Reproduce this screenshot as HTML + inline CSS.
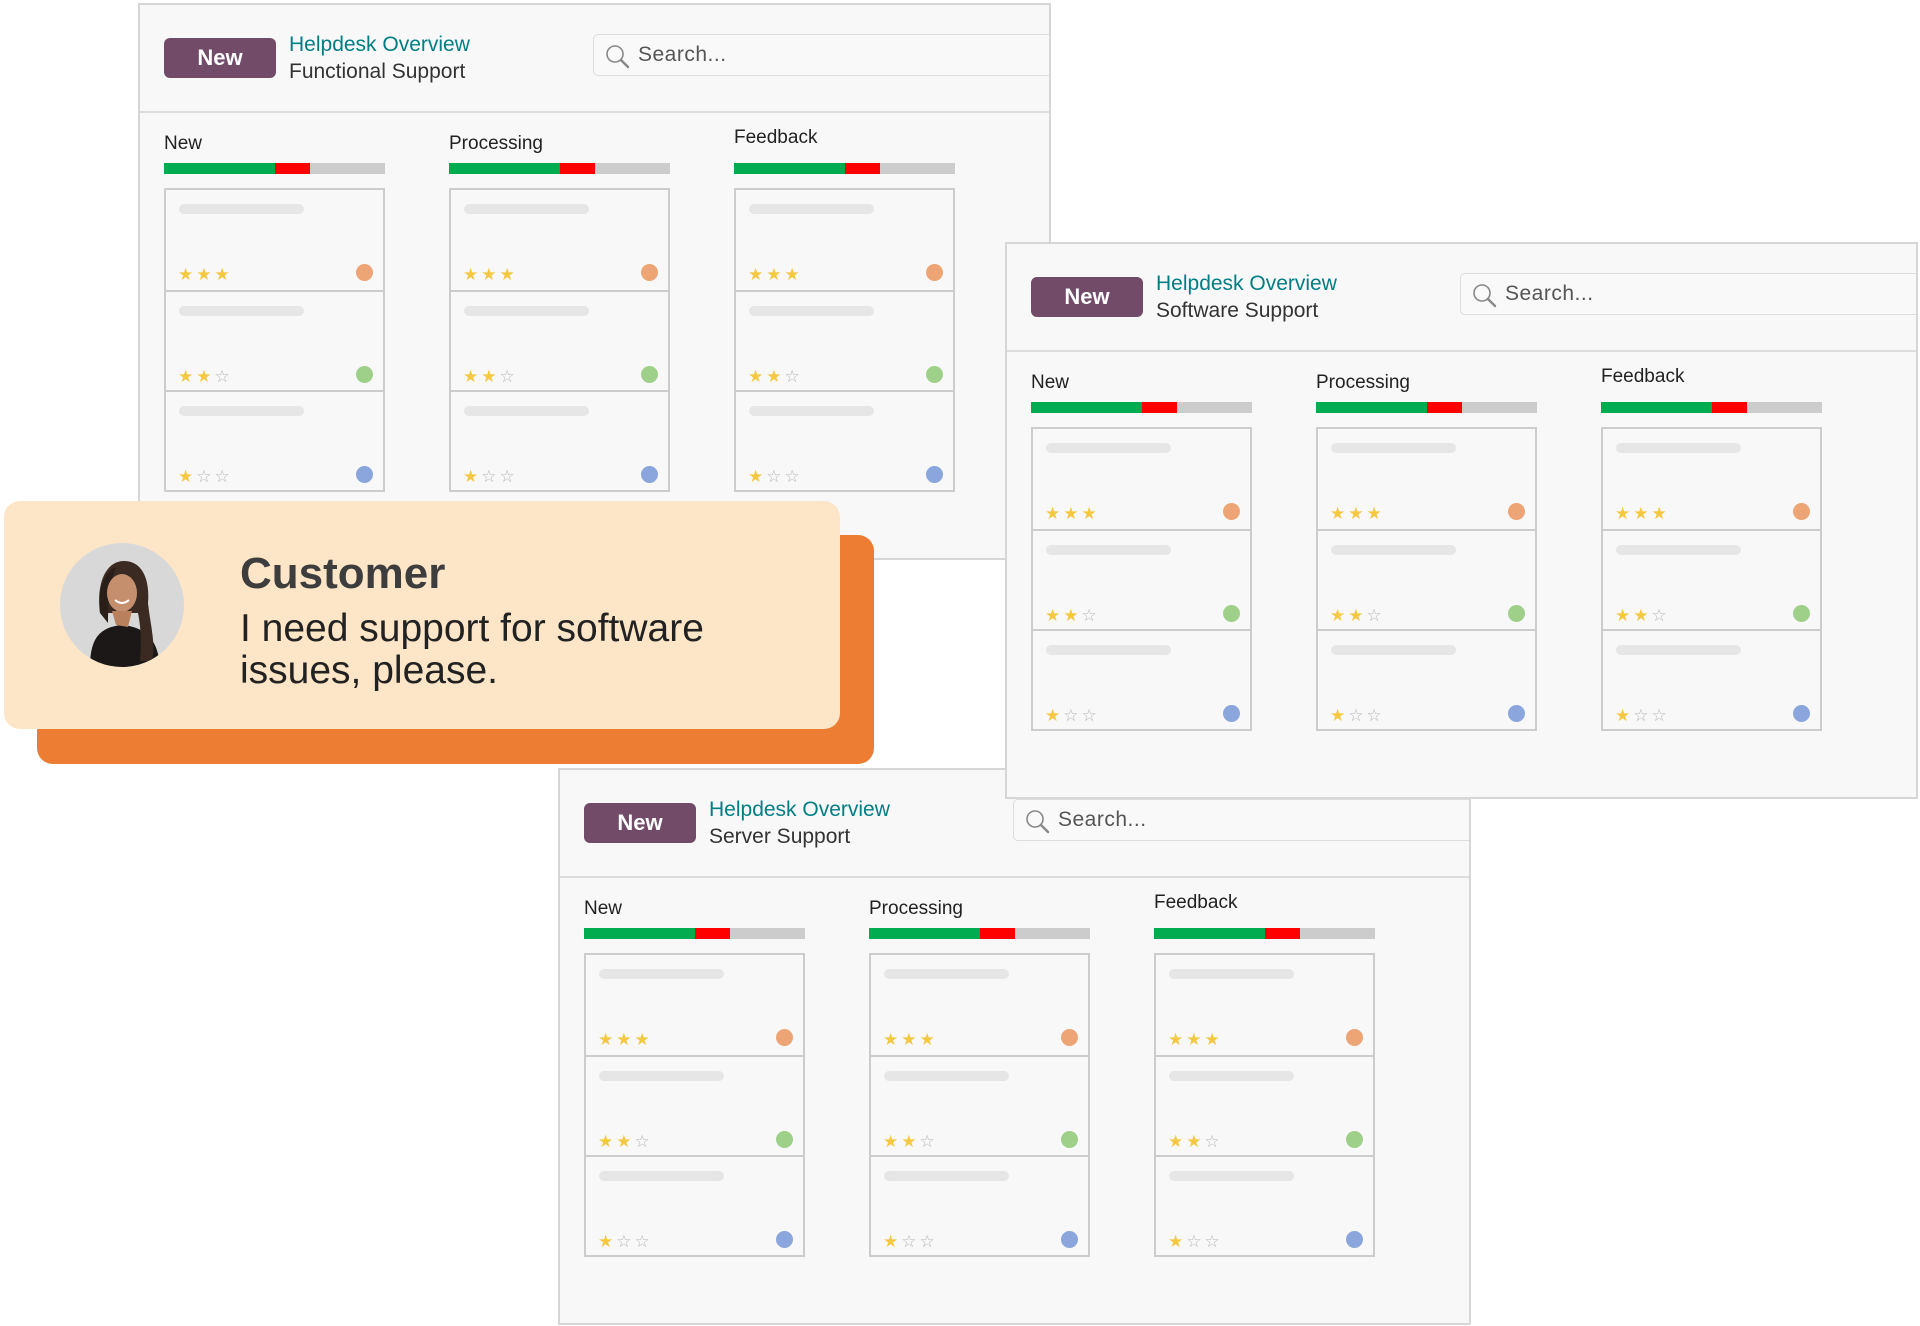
<!DOCTYPE html>
<html><head><meta charset="utf-8"><style>
body{margin:0;width:1920px;height:1326px;background:#fff;position:relative;overflow:hidden;font-family:"Liberation Sans",sans-serif}
.p{position:absolute;width:909px;height:553px;background:#f8f8f8;border:2px solid #d6d6d6;overflow:hidden}
.hd{position:absolute;left:0;top:0;width:909px;height:106px;border-bottom:2px solid #ddd}
.btn{position:absolute;left:24px;top:33px;width:112px;height:40px;background:#714b67;border-radius:6px;color:#fff;font-weight:bold;font-size:22px;line-height:40px;text-align:center}
.t1{position:absolute;left:149px;top:28px;font-size:21px;color:#017e84}
.t2{position:absolute;left:149px;top:55px;font-size:21px;color:#333}
.sr{position:absolute;left:453px;top:29px;width:470px;height:40px;border:1px solid #ddd;border-radius:5px;background:#f9f9f9}
.sr svg{position:absolute;left:10px;top:8px}
.sr span{position:absolute;left:44px;top:8px;font-size:21px;color:#555;letter-spacing:.5px}
.col{position:absolute;top:0;width:221px;height:553px}
.h{position:absolute;left:0;top:128px;font-size:19px;color:#222}
.bar{position:absolute;left:0;top:158px;width:221px;height:11px;background:#ccc}
.bar i{position:absolute;top:0;height:11px}
.cards{position:absolute;left:0;top:183px;width:217px;height:300px;border:2px solid #ccc;background:#f8f8f8}
.c{position:absolute;left:0;width:217px;height:100px}
.c+.c{border-top:2px solid #ccc}
.ph{position:absolute;left:13px;top:14px;width:125px;height:10px;border-radius:5px;background:#e6e6e6}
.st{position:absolute;left:12px;top:75px;font-size:17px;letter-spacing:3px;color:#f5c842}
.st b{color:#b8b8b8;font-weight:normal}
.d{position:absolute;right:10px;top:74px;width:17px;height:17px;border-radius:50%}
</style></head><body>

<!-- Panel 1 -->
<div class="p" style="left:138px;top:3px">
<div class="hd"></div><div class="btn">New</div><div class="t1">Helpdesk Overview</div><div class="t2">Functional Support</div>
<div class="sr"><svg width="28" height="28" viewBox="0 0 28 28"><circle cx="11" cy="11" r="8" fill="none" stroke="#888" stroke-width="1.6"/><path d="M17 17l7 7" stroke="#888" stroke-width="2.4" stroke-linecap="round"/></svg><span>Search...</span></div>
<div class="col" style="left:24px"><div class="h">New</div><div class="bar"><i style="left:0;width:111px;background:#00ac4f"></i><i style="left:111px;width:35px;background:#f00"></i></div>
<div class="cards"><div class="c" style="top:0"><div class="ph"></div><div class="st">★★★</div><div class="d" style="background:#eda575"></div></div><div class="c" style="top:100px"><div class="ph"></div><div class="st">★★<b>☆</b></div><div class="d" style="background:#9fd08a"></div></div><div class="c" style="top:200px"><div class="ph"></div><div class="st">★<b>☆☆</b></div><div class="d" style="background:#8aa6dc"></div></div></div></div>
<div class="col" style="left:309px"><div class="h">Processing</div><div class="bar"><i style="left:0;width:111px;background:#00ac4f"></i><i style="left:111px;width:35px;background:#f00"></i></div>
<div class="cards"><div class="c" style="top:0"><div class="ph"></div><div class="st">★★★</div><div class="d" style="background:#eda575"></div></div><div class="c" style="top:100px"><div class="ph"></div><div class="st">★★<b>☆</b></div><div class="d" style="background:#9fd08a"></div></div><div class="c" style="top:200px"><div class="ph"></div><div class="st">★<b>☆☆</b></div><div class="d" style="background:#8aa6dc"></div></div></div></div>
<div class="col" style="left:594px"><div class="h" style="top:122px">Feedback</div><div class="bar"><i style="left:0;width:111px;background:#00ac4f"></i><i style="left:111px;width:35px;background:#f00"></i></div>
<div class="cards"><div class="c" style="top:0"><div class="ph"></div><div class="st">★★★</div><div class="d" style="background:#eda575"></div></div><div class="c" style="top:100px"><div class="ph"></div><div class="st">★★<b>☆</b></div><div class="d" style="background:#9fd08a"></div></div><div class="c" style="top:200px"><div class="ph"></div><div class="st">★<b>☆☆</b></div><div class="d" style="background:#8aa6dc"></div></div></div></div>
</div>

<!-- Panel 3 -->
<div class="p" style="left:558px;top:768px">
<div class="hd"></div><div class="btn">New</div><div class="t1">Helpdesk Overview</div><div class="t2">Server Support</div>
<div class="sr"><svg width="28" height="28" viewBox="0 0 28 28"><circle cx="11" cy="11" r="8" fill="none" stroke="#888" stroke-width="1.6"/><path d="M17 17l7 7" stroke="#888" stroke-width="2.4" stroke-linecap="round"/></svg><span>Search...</span></div>
<div class="col" style="left:24px"><div class="h">New</div><div class="bar"><i style="left:0;width:111px;background:#00ac4f"></i><i style="left:111px;width:35px;background:#f00"></i></div>
<div class="cards"><div class="c" style="top:0"><div class="ph"></div><div class="st">★★★</div><div class="d" style="background:#eda575"></div></div><div class="c" style="top:100px"><div class="ph"></div><div class="st">★★<b>☆</b></div><div class="d" style="background:#9fd08a"></div></div><div class="c" style="top:200px"><div class="ph"></div><div class="st">★<b>☆☆</b></div><div class="d" style="background:#8aa6dc"></div></div></div></div>
<div class="col" style="left:309px"><div class="h">Processing</div><div class="bar"><i style="left:0;width:111px;background:#00ac4f"></i><i style="left:111px;width:35px;background:#f00"></i></div>
<div class="cards"><div class="c" style="top:0"><div class="ph"></div><div class="st">★★★</div><div class="d" style="background:#eda575"></div></div><div class="c" style="top:100px"><div class="ph"></div><div class="st">★★<b>☆</b></div><div class="d" style="background:#9fd08a"></div></div><div class="c" style="top:200px"><div class="ph"></div><div class="st">★<b>☆☆</b></div><div class="d" style="background:#8aa6dc"></div></div></div></div>
<div class="col" style="left:594px"><div class="h" style="top:122px">Feedback</div><div class="bar"><i style="left:0;width:111px;background:#00ac4f"></i><i style="left:111px;width:35px;background:#f00"></i></div>
<div class="cards"><div class="c" style="top:0"><div class="ph"></div><div class="st">★★★</div><div class="d" style="background:#eda575"></div></div><div class="c" style="top:100px"><div class="ph"></div><div class="st">★★<b>☆</b></div><div class="d" style="background:#9fd08a"></div></div><div class="c" style="top:200px"><div class="ph"></div><div class="st">★<b>☆☆</b></div><div class="d" style="background:#8aa6dc"></div></div></div></div>
</div>

<!-- Panel 2 -->
<div class="p" style="left:1005px;top:242px">
<div class="hd"></div><div class="btn">New</div><div class="t1">Helpdesk Overview</div><div class="t2">Software Support</div>
<div class="sr"><svg width="28" height="28" viewBox="0 0 28 28"><circle cx="11" cy="11" r="8" fill="none" stroke="#888" stroke-width="1.6"/><path d="M17 17l7 7" stroke="#888" stroke-width="2.4" stroke-linecap="round"/></svg><span>Search...</span></div>
<div class="col" style="left:24px"><div class="h">New</div><div class="bar"><i style="left:0;width:111px;background:#00ac4f"></i><i style="left:111px;width:35px;background:#f00"></i></div>
<div class="cards"><div class="c" style="top:0"><div class="ph"></div><div class="st">★★★</div><div class="d" style="background:#eda575"></div></div><div class="c" style="top:100px"><div class="ph"></div><div class="st">★★<b>☆</b></div><div class="d" style="background:#9fd08a"></div></div><div class="c" style="top:200px"><div class="ph"></div><div class="st">★<b>☆☆</b></div><div class="d" style="background:#8aa6dc"></div></div></div></div>
<div class="col" style="left:309px"><div class="h">Processing</div><div class="bar"><i style="left:0;width:111px;background:#00ac4f"></i><i style="left:111px;width:35px;background:#f00"></i></div>
<div class="cards"><div class="c" style="top:0"><div class="ph"></div><div class="st">★★★</div><div class="d" style="background:#eda575"></div></div><div class="c" style="top:100px"><div class="ph"></div><div class="st">★★<b>☆</b></div><div class="d" style="background:#9fd08a"></div></div><div class="c" style="top:200px"><div class="ph"></div><div class="st">★<b>☆☆</b></div><div class="d" style="background:#8aa6dc"></div></div></div></div>
<div class="col" style="left:594px"><div class="h" style="top:122px">Feedback</div><div class="bar"><i style="left:0;width:111px;background:#00ac4f"></i><i style="left:111px;width:35px;background:#f00"></i></div>
<div class="cards"><div class="c" style="top:0"><div class="ph"></div><div class="st">★★★</div><div class="d" style="background:#eda575"></div></div><div class="c" style="top:100px"><div class="ph"></div><div class="st">★★<b>☆</b></div><div class="d" style="background:#9fd08a"></div></div><div class="c" style="top:200px"><div class="ph"></div><div class="st">★<b>☆☆</b></div><div class="d" style="background:#8aa6dc"></div></div></div></div>
</div>

<!-- Customer card -->
<div style="position:absolute;left:37px;top:535px;width:837px;height:229px;background:#ec7d32;border-radius:16px"></div>
<div style="position:absolute;left:4px;top:501px;width:836px;height:228px;background:#fde6c8;border-radius:16px">
<svg style="position:absolute;left:56px;top:42px" width="124" height="124" viewBox="0 0 124 124">
<defs><clipPath id="cc"><circle cx="62" cy="62" r="62"/></clipPath></defs>
<g clip-path="url(#cc)">
<rect width="124" height="124" fill="#d8d8d8"/>
<path d="M30 124 C30 95 40 84 62 82 C84 84 98 95 100 124Z" fill="#1c1818"/>
<path d="M40 70 C36 40 46 18 64 18 C82 18 90 36 88 60 C90 80 96 100 92 118 L80 118 C82 95 80 80 78 70Z" fill="#3a2a22"/>
<path d="M40 70 C38 50 42 30 56 24 C50 40 48 60 48 80Z" fill="#2a1e18"/>
<ellipse cx="62" cy="50" rx="15" ry="19" fill="#c58f6e"/>
<path d="M52 68 L56 82 L68 84 L72 68Z" fill="#b9805e"/>
<path d="M55 57 Q62 63 69 57" stroke="#fff" stroke-width="2" fill="none"/>
</g></svg>
<div style="position:absolute;left:236px;top:48px;font-size:44px;font-weight:bold;color:#3d3d3d">Customer</div>
<div style="position:absolute;left:236px;top:107px;font-size:39px;line-height:42px;color:#222">I need support for software<br>issues, please.</div>
</div>
</body></html>
